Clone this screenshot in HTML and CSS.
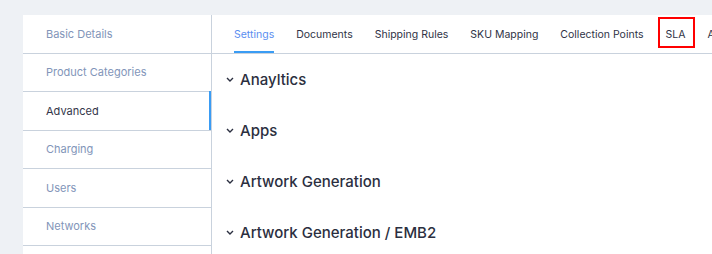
FILE: index.html
```html
<!DOCTYPE html>
<html lang="en">
  <head>
    <meta charset="UTF-8" />
    <meta name="viewport" content="width=device-width, initial-scale=1.0" />
    <title>Settings</title>
    <link rel="stylesheet" href="styles.css">
  </head>
  <body>
    <div class="page">
      <div class="sidebar">
        <div class="side-item">Basic Details</div>
        <div class="side-item">Product Categories</div>
        <div class="side-item active">Advanced</div>
        <div class="side-item">Charging</div>
        <div class="side-item">Users</div>
        <div class="side-item">Networks</div>
        <div class="side-item"></div>
      </div>

      <div class="main">
        <div class="tabs">
          <div class="tab active">Settings</div>
          <div class="tab">Documents</div>
          <div class="tab">Shipping Rules</div>
          <div class="tab">SKU Mapping</div>
          <div class="tab">Collection Points</div>
          <div class="tab marked">SLA</div>
          <div class="tab">Alerts</div>
        </div>

        <div class="section">
          <svg class="chevron" width="8" height="5" viewBox="0 0 8 5"><path d="M1 1 L4 4 L7 1" /></svg>
          <span>Anayltics</span>
        </div>
        <div class="section">
          <svg class="chevron" width="8" height="5" viewBox="0 0 8 5"><path d="M1 1 L4 4 L7 1" /></svg>
          <span>Apps</span>
        </div>
        <div class="section">
          <svg class="chevron" width="8" height="5" viewBox="0 0 8 5"><path d="M1 1 L4 4 L7 1" /></svg>
          <span>Artwork Generation</span>
        </div>
        <div class="section">
          <svg class="chevron" width="8" height="5" viewBox="0 0 8 5"><path d="M1 1 L4 4 L7 1" /></svg>
          <span>Artwork Generation / EMB2</span>
        </div>
      </div>
    </div>
  </body>
</html>
```

FILE: styles.css
```css
body {
  font-family: Inter, "Noto Sans", Arial, sans-serif;
  background-color: #eef1f5;
  margin: 0;
  height: 254px;
  overflow: hidden;
}

.page {
  display: flex;
  padding: 15px 0 0 23px;
}

.sidebar {
  width: 188px;
  background-color: #fff;
  flex-shrink: 0;
}

.side-item {
  position: relative;
  box-sizing: border-box;
  height: 38.5px;
  padding-left: 23px;
  display: flex;
  align-items: center;
  border-bottom: 1px solid #c9d2dd;
  font-size: 11px;
  color: #8295b9;
}

.side-item.active {
  color: #33364a;
}

.side-item.active::after {
  content: "";
  position: absolute;
  right: 0;
  top: -1px;
  bottom: 0;
  width: 2px;
  background-color: #3a9cf4;
}

.main {
  flex: 1;
  background-color: #fff;
  border-left: 1px solid #c9d2dd;
  min-height: 260px;
  overflow: hidden;
}

.tabs {
  display: flex;
  gap: 22px;
  height: 38px;
  padding-left: 22px;
  border-bottom: 1px solid #c9d2dd;
  white-space: nowrap;
}

.tab {
  position: relative;
  display: flex;
  align-items: center;
  font-size: 10.5px;
  color: #2f3346;
}

.tab.active {
  color: #5b8ef0;
}

.tab.active::after {
  content: "";
  position: absolute;
  left: 0;
  right: 0;
  bottom: 0;
  height: 2px;
  background-color: #3a9cf4;
}

.tab.marked::before {
  content: "";
  position: absolute;
  left: -8px;
  right: -10px;
  top: 2px;
  height: 27px;
  border: 2px solid #f00;
}

.section {
  display: flex;
  align-items: center;
  gap: 6px;
  height: 51px;
  padding-left: 14px;
  font-size: 15px;
  font-weight: 500;
  color: #2b2f40;
}

.section:first-of-type {
  margin-top: 1px;
}

.chevron path {
  fill: none;
  stroke: #2b2f40;
  stroke-width: 1.4;
}
```
